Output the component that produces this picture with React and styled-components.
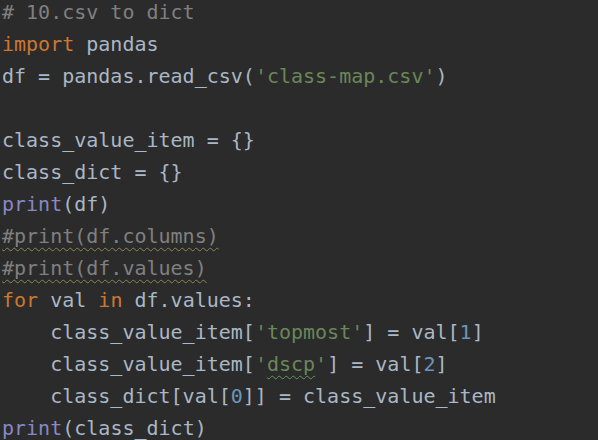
import React from 'react';
import styled, { createGlobalStyle } from 'styled-components';

const GlobalStyle = createGlobalStyle`
  html, body {
    margin: 0;
    padding: 0;
    background: #2b2b2b;
  }
`;

const colors = {
  plain: '#a9b7c6',
  comment: '#808080',
  keyword: '#cc7832',
  string: '#6a8759',
  number: '#6897bb',
  builtin: '#8888c6'
};

const Editor = styled.div`
  width: 598px;
  height: 440px;
  overflow: hidden;
  background: #2b2b2b;
`;

const Code = styled.pre`
  margin: -4px 0 0 0;
  padding: 0 0 0 2px;
  font-family: 'DejaVu Sans Mono', 'Liberation Mono', monospace;
  font-size: 20px;
  line-height: 32px;
  color: ${colors.plain};
`;

const Line = styled.div`
  height: 32px;
  white-space: pre;
`;

const Token = styled.span`
  color: ${p => colors[p.$kind] || colors.plain};
  ${p =>
    p.$wavy &&
    `
    text-decoration: underline wavy ${p.$wavy};
    text-decoration-thickness: 1px;
    text-underline-offset: 4px;
  `}
`;

const t = (text, kind = 'plain', wavy) => ({ text, kind, wavy });

const lines = [
  [t('# 10.csv to dict', 'comment')],
  [t('import', 'keyword'), t(' pandas')],
  [t('df = pandas.read_csv('), t("'class-map.csv'", 'string'), t(')')],
  [],
  [t('class_value_item = {}')],
  [t('class_dict = {}')],
  [t('print', 'builtin'), t('(df)')],
  [t('#print(df.columns)', 'comment', '#8a8653')],
  [t('#print(df.values)', 'comment', '#8a8653')],
  [t('for', 'keyword'), t(' val '), t('in', 'keyword'), t(' df.values:')],
  [t('    class_value_item['), t("'topmost'", 'string'), t('] = val['), t('1', 'number'), t(']')],
  [
    t('    class_value_item['),
    t("'", 'string'),
    t('dscp', 'string', '#5f9a5f'),
    t("'", 'string'),
    t('] = val['),
    t('2', 'number'),
    t(']')
  ],
  [t('    class_dict[val['), t('0', 'number'), t(']] = class_value_item')],
  [t('print', 'builtin'), t('(class_dict)')]
];

export default function App() {
  return (
    <Editor>
      <GlobalStyle />
      <Code>
        {lines.map((tokens, i) => (
          <Line key={i}>
            {tokens.map((tok, j) => (
              <Token key={j} $kind={tok.kind} $wavy={tok.wavy}>
                {tok.text}
              </Token>
            ))}
          </Line>
        ))}
      </Code>
    </Editor>
  );
}
